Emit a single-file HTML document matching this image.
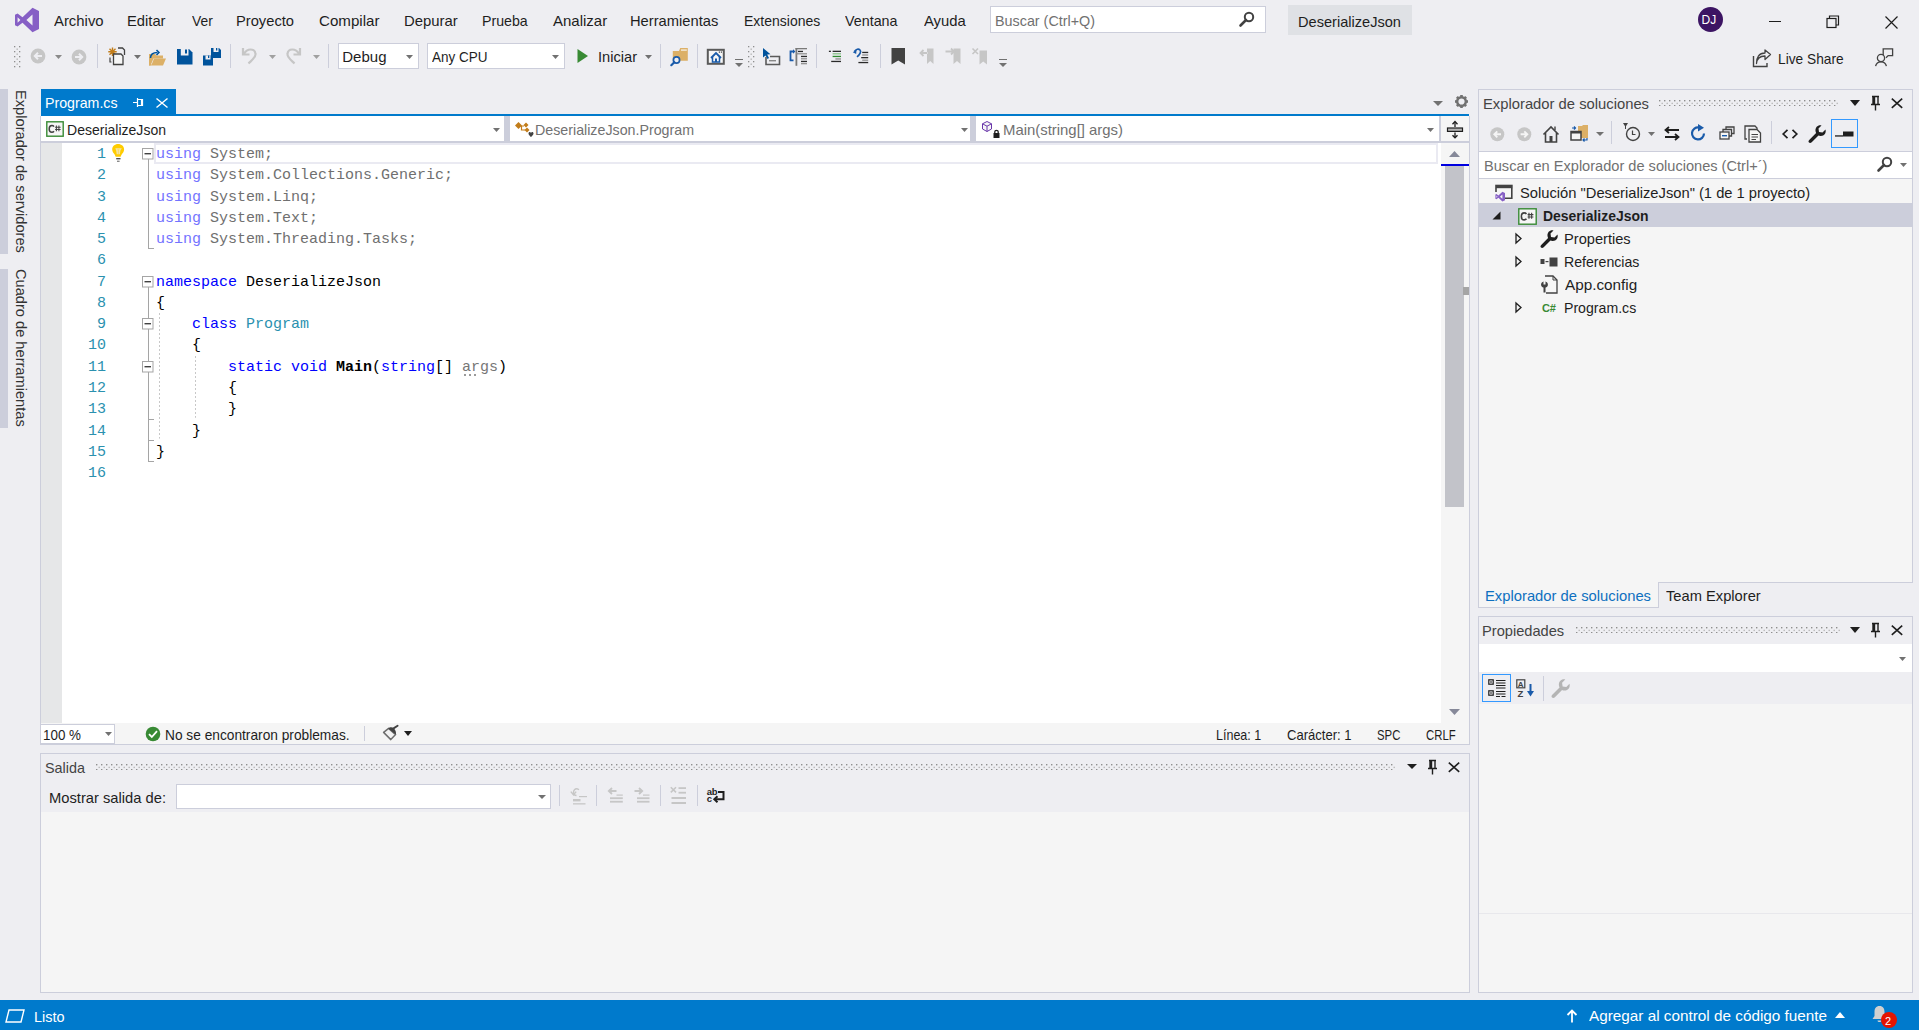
<!DOCTYPE html>
<html><head><meta charset="utf-8"><title>VS</title>
<style>
html,body{margin:0;padding:0;}
body{width:1919px;height:1030px;overflow:hidden;position:relative;background:#EEEEF2;font-family:"Liberation Sans",sans-serif;}
.a{position:absolute;}
.t{white-space:pre;}
svg{position:absolute;overflow:visible;}
</style></head><body>
<div class="a t" style="left:53.97px;top:13.30px;font-size:15px;line-height:15px;color:#1E1E1E;transform:scaleX(0.9914);transform-origin:0 0;">Archivo</div>
<div class="a t" style="left:127.39px;top:13.30px;font-size:15px;line-height:15px;color:#1E1E1E;transform:scaleX(0.9825);transform-origin:0 0;">Editar</div>
<div class="a t" style="left:192.14px;top:13.30px;font-size:15px;line-height:15px;color:#1E1E1E;transform:scaleX(0.9238);transform-origin:0 0;">Ver</div>
<div class="a t" style="left:236.29px;top:13.30px;font-size:15px;line-height:15px;color:#1E1E1E;transform:scaleX(0.9797);transform-origin:0 0;">Proyecto</div>
<div class="a t" style="left:319.23px;top:13.30px;font-size:15px;line-height:15px;color:#1E1E1E;transform:scaleX(1.0081);transform-origin:0 0;">Compilar</div>
<div class="a t" style="left:403.78px;top:13.30px;font-size:15px;line-height:15px;color:#1E1E1E;transform:scaleX(0.9916);transform-origin:0 0;">Depurar</div>
<div class="a t" style="left:481.84px;top:13.30px;font-size:15px;line-height:15px;color:#1E1E1E;transform:scaleX(0.9457);transform-origin:0 0;">Prueba</div>
<div class="a t" style="left:552.97px;top:13.30px;font-size:15px;line-height:15px;color:#1E1E1E;">Analizar</div>
<div class="a t" style="left:630.04px;top:13.30px;font-size:15px;line-height:15px;color:#1E1E1E;transform:scaleX(0.9802);transform-origin:0 0;">Herramientas</div>
<div class="a t" style="left:743.85px;top:13.30px;font-size:15px;line-height:15px;color:#1E1E1E;transform:scaleX(0.9331);transform-origin:0 0;">Extensiones</div>
<div class="a t" style="left:845.44px;top:13.30px;font-size:15px;line-height:15px;color:#1E1E1E;transform:scaleX(0.9535);transform-origin:0 0;">Ventana</div>
<div class="a t" style="left:923.72px;top:13.30px;font-size:15px;line-height:15px;color:#1E1E1E;transform:scaleX(0.9878);transform-origin:0 0;">Ayuda</div>
<div class="a" style="left:990px;top:6px;width:276px;height:27px;background:#FFFFFF;box-shadow:inset 0 0 0 1px #CCCEDB;"></div>
<div class="a t" style="left:995.32px;top:13.30px;font-size:15px;line-height:15px;color:#717171;transform:scaleX(0.9559);transform-origin:0 0;">Buscar (Ctrl+Q)</div>
<div class="a" style="left:1288px;top:5px;width:124px;height:30px;background:#DFE1E5;"></div>
<div class="a t" style="left:1297.80px;top:14.30px;font-size:15px;line-height:15px;color:#1E1E1E;transform:scaleX(0.9727);transform-origin:0 0;">DeserializeJson</div>
<div class="a" style="left:1698px;top:7px;width:25px;height:25px;border-radius:50%;background:#3C1463;"></div>
<div class="a t" style="left:1701.52px;top:14.34px;font-size:12px;line-height:12px;color:#FFFFFF;">DJ</div>
<div class="a" style="left:338px;top:43px;width:81px;height:26px;background:#FFFFFF;box-shadow:inset 0 0 0 1px #CCCEDB;"></div>
<div class="a t" style="left:342.28px;top:49.30px;font-size:15px;line-height:15px;color:#1E1E1E;">Debug</div>
<div class="a" style="left:427px;top:43px;width:138px;height:26px;background:#FFFFFF;box-shadow:inset 0 0 0 1px #CCCEDB;"></div>
<div class="a t" style="left:432.17px;top:49.30px;font-size:15px;line-height:15px;color:#1E1E1E;transform:scaleX(0.8997);transform-origin:0 0;">Any CPU</div>
<div class="a t" style="left:598.25px;top:49.30px;font-size:15px;line-height:15px;color:#1E1E1E;transform:scaleX(0.9746);transform-origin:0 0;">Iniciar</div>
<div class="a t" style="left:1777.87px;top:51.30px;font-size:15px;line-height:15px;color:#1E1E1E;transform:scaleX(0.9147);transform-origin:0 0;">Live Share</div>
<div class="a" style="left:0px;top:89px;width:8px;height:165px;background:#CCCEDB;"></div>
<div class="a" style="left:0px;top:269px;width:8px;height:159px;background:#CCCEDB;"></div>
<div class="a t" style="left:15px;top:90px;font-size:15px;line-height:15px;color:#333333;transform-origin:0 0;transform:translate(14px,0) rotate(90deg) scaleX(0.977);">Explorador de servidores</div>
<div class="a t" style="left:15px;top:268.8px;font-size:15px;line-height:15px;color:#333333;transform-origin:0 0;transform:translate(14px,0) rotate(90deg) scaleX(0.975);">Cuadro de herramientas</div>
<div class="a" style="left:41px;top:89px;width:135px;height:27px;background:#007ACC;"></div>
<div class="a t" style="left:45.44px;top:95.10px;font-size:15px;line-height:15px;color:#FFFFFF;transform:scaleX(0.9454);transform-origin:0 0;">Program.cs</div>
<div class="a" style="left:41px;top:114px;width:1428px;height:2px;background:#007ACC;"></div>
<div class="a" style="left:41px;top:116px;width:1428px;height:25px;background:#FFFFFF;"></div>
<div class="a" style="left:41px;top:141px;width:1428px;height:2px;background:#CCCEDB;"></div>
<div class="a" style="left:504px;top:116px;width:6px;height:25px;background:#CCCEDB;"></div>
<div class="a" style="left:970px;top:116px;width:6px;height:25px;background:#CCCEDB;"></div>
<div class="a" style="left:1439px;top:116px;width:2px;height:25px;background:#CCCEDB;"></div>
<div class="a" style="left:1441px;top:116px;width:28px;height:25px;background:#F5F5F5;"></div>
<div class="a t" style="left:66.85px;top:122.30px;font-size:15px;line-height:15px;color:#1E1E1E;transform:scaleX(0.9349);transform-origin:0 0;">DeserializeJson</div>
<div class="a t" style="left:534.73px;top:122.30px;font-size:15px;line-height:15px;color:#717171;transform:scaleX(0.9488);transform-origin:0 0;">DeserializeJson.Program</div>
<div class="a t" style="left:1002.53px;top:122.30px;font-size:15px;line-height:15px;color:#717171;transform:scaleX(0.9928);transform-origin:0 0;">Main(string[] args)</div>
<div class="a" style="left:40px;top:116px;width:1px;height:629px;background:#CCCEDB;"></div>
<div class="a" style="left:1469px;top:116px;width:1px;height:629px;background:#CCCEDB;"></div>
<div class="a" style="left:41px;top:143px;width:1400px;height:580px;background:#FFFFFF;"></div>
<div class="a" style="left:41px;top:143px;width:21px;height:580px;background:#E6E7E8;"></div>
<div class="a" style="left:1441px;top:143px;width:28px;height:580px;background:#F5F5F5;"></div>
<div class="a" style="left:1445px;top:166px;width:19px;height:341px;background:#C2C3C9;"></div>
<div class="a" style="left:1441px;top:164px;width:28px;height:2px;background:#0000E0;"></div>
<div class="a" style="left:1463px;top:287px;width:6px;height:8px;background:#A5A5A5;"></div>
<div class="a t" style="left:97.00px;top:147.01px;font-size:15px;line-height:15px;color:#2B91AF;font-family:'Liberation Mono',monospace;">1</div>
<div class="a t" style="left:156.00px;top:147.01px;font-size:15px;line-height:15px;color:#7373FF;font-family:'Liberation Mono',monospace;">using</div>
<div class="a t" style="left:201.00px;top:147.01px;font-size:15px;line-height:15px;color:#707070;font-family:'Liberation Mono',monospace;"> System;</div>
<div class="a t" style="left:97.00px;top:168.28px;font-size:15px;line-height:15px;color:#2B91AF;font-family:'Liberation Mono',monospace;">2</div>
<div class="a t" style="left:156.00px;top:168.28px;font-size:15px;line-height:15px;color:#7373FF;font-family:'Liberation Mono',monospace;">using</div>
<div class="a t" style="left:201.00px;top:168.28px;font-size:15px;line-height:15px;color:#707070;font-family:'Liberation Mono',monospace;"> System.Collections.Generic;</div>
<div class="a t" style="left:97.00px;top:189.55px;font-size:15px;line-height:15px;color:#2B91AF;font-family:'Liberation Mono',monospace;">3</div>
<div class="a t" style="left:156.00px;top:189.55px;font-size:15px;line-height:15px;color:#7373FF;font-family:'Liberation Mono',monospace;">using</div>
<div class="a t" style="left:201.00px;top:189.55px;font-size:15px;line-height:15px;color:#707070;font-family:'Liberation Mono',monospace;"> System.Linq;</div>
<div class="a t" style="left:97.00px;top:210.82px;font-size:15px;line-height:15px;color:#2B91AF;font-family:'Liberation Mono',monospace;">4</div>
<div class="a t" style="left:156.00px;top:210.82px;font-size:15px;line-height:15px;color:#7373FF;font-family:'Liberation Mono',monospace;">using</div>
<div class="a t" style="left:201.00px;top:210.82px;font-size:15px;line-height:15px;color:#707070;font-family:'Liberation Mono',monospace;"> System.Text;</div>
<div class="a t" style="left:97.00px;top:232.09px;font-size:15px;line-height:15px;color:#2B91AF;font-family:'Liberation Mono',monospace;">5</div>
<div class="a t" style="left:156.00px;top:232.09px;font-size:15px;line-height:15px;color:#7373FF;font-family:'Liberation Mono',monospace;">using</div>
<div class="a t" style="left:201.00px;top:232.09px;font-size:15px;line-height:15px;color:#707070;font-family:'Liberation Mono',monospace;"> System.Threading.Tasks;</div>
<div class="a t" style="left:97.00px;top:253.36px;font-size:15px;line-height:15px;color:#2B91AF;font-family:'Liberation Mono',monospace;">6</div>
<div class="a t" style="left:97.00px;top:274.63px;font-size:15px;line-height:15px;color:#2B91AF;font-family:'Liberation Mono',monospace;">7</div>
<div class="a t" style="left:156.00px;top:274.63px;font-size:15px;line-height:15px;color:#0000FF;font-family:'Liberation Mono',monospace;">namespace</div>
<div class="a t" style="left:237.00px;top:274.63px;font-size:15px;line-height:15px;color:#000000;font-family:'Liberation Mono',monospace;"> DeserializeJson</div>
<div class="a t" style="left:97.00px;top:295.90px;font-size:15px;line-height:15px;color:#2B91AF;font-family:'Liberation Mono',monospace;">8</div>
<div class="a t" style="left:156.00px;top:295.90px;font-size:15px;line-height:15px;color:#000000;font-family:'Liberation Mono',monospace;">{</div>
<div class="a t" style="left:97.00px;top:317.17px;font-size:15px;line-height:15px;color:#2B91AF;font-family:'Liberation Mono',monospace;">9</div>
<div class="a t" style="left:192.00px;top:317.17px;font-size:15px;line-height:15px;color:#0000FF;font-family:'Liberation Mono',monospace;">class</div>
<div class="a t" style="left:246.00px;top:317.17px;font-size:15px;line-height:15px;color:#2B91AF;font-family:'Liberation Mono',monospace;">Program</div>
<div class="a t" style="left:88.00px;top:338.44px;font-size:15px;line-height:15px;color:#2B91AF;font-family:'Liberation Mono',monospace;">10</div>
<div class="a t" style="left:156.00px;top:338.44px;font-size:15px;line-height:15px;color:#000000;font-family:'Liberation Mono',monospace;">    {</div>
<div class="a t" style="left:88.00px;top:359.71px;font-size:15px;line-height:15px;color:#2B91AF;font-family:'Liberation Mono',monospace;">11</div>
<div class="a t" style="left:228.00px;top:359.71px;font-size:15px;line-height:15px;color:#0000FF;font-family:'Liberation Mono',monospace;">static void</div>
<div class="a t" style="left:336.00px;top:359.71px;font-size:15px;line-height:15px;color:#000000;font-family:'Liberation Mono',monospace;font-weight:700;">Main</div>
<div class="a t" style="left:372.00px;top:359.71px;font-size:15px;line-height:15px;color:#000000;font-family:'Liberation Mono',monospace;">(</div>
<div class="a t" style="left:381.00px;top:359.71px;font-size:15px;line-height:15px;color:#0000FF;font-family:'Liberation Mono',monospace;">string</div>
<div class="a t" style="left:435.00px;top:359.71px;font-size:15px;line-height:15px;color:#000000;font-family:'Liberation Mono',monospace;">[] </div>
<div class="a t" style="left:462.00px;top:359.71px;font-size:15px;line-height:15px;color:#767676;font-family:'Liberation Mono',monospace;">args</div>
<div class="a t" style="left:498.00px;top:359.71px;font-size:15px;line-height:15px;color:#000000;font-family:'Liberation Mono',monospace;">)</div>
<div class="a t" style="left:88.00px;top:380.98px;font-size:15px;line-height:15px;color:#2B91AF;font-family:'Liberation Mono',monospace;">12</div>
<div class="a t" style="left:156.00px;top:380.98px;font-size:15px;line-height:15px;color:#000000;font-family:'Liberation Mono',monospace;">        {</div>
<div class="a t" style="left:88.00px;top:402.25px;font-size:15px;line-height:15px;color:#2B91AF;font-family:'Liberation Mono',monospace;">13</div>
<div class="a t" style="left:156.00px;top:402.25px;font-size:15px;line-height:15px;color:#000000;font-family:'Liberation Mono',monospace;">        }</div>
<div class="a t" style="left:88.00px;top:423.52px;font-size:15px;line-height:15px;color:#2B91AF;font-family:'Liberation Mono',monospace;">14</div>
<div class="a t" style="left:156.00px;top:423.52px;font-size:15px;line-height:15px;color:#000000;font-family:'Liberation Mono',monospace;">    }</div>
<div class="a t" style="left:88.00px;top:444.79px;font-size:15px;line-height:15px;color:#2B91AF;font-family:'Liberation Mono',monospace;">15</div>
<div class="a t" style="left:156.00px;top:444.79px;font-size:15px;line-height:15px;color:#000000;font-family:'Liberation Mono',monospace;">}</div>
<div class="a t" style="left:88.00px;top:466.06px;font-size:15px;line-height:15px;color:#2B91AF;font-family:'Liberation Mono',monospace;">16</div>
<div class="a" style="left:41px;top:723px;width:1428px;height:21px;background:#F5F5F5;"></div>
<div class="a" style="left:40px;top:744px;width:1430px;height:1px;background:#CCCEDB;"></div>
<div class="a" style="left:40px;top:724px;width:75px;height:20px;background:#FFFFFF;box-shadow:inset 0 0 0 1px #CCCEDB;"></div>
<div class="a t" style="left:43.38px;top:727.30px;font-size:15px;line-height:15px;color:#1E1E1E;transform:scaleX(0.8931);transform-origin:0 0;">100 %</div>
<div class="a t" style="left:165.17px;top:727.30px;font-size:15px;line-height:15px;color:#1E1E1E;transform:scaleX(0.9149);transform-origin:0 0;">No se encontraron problemas.</div>
<div class="a t" style="left:1216.37px;top:727.30px;font-size:15px;line-height:15px;color:#1E1E1E;transform:scaleX(0.8337);transform-origin:0 0;">Línea: 1</div>
<div class="a t" style="left:1286.54px;top:727.30px;font-size:15px;line-height:15px;color:#1E1E1E;transform:scaleX(0.8706);transform-origin:0 0;">Carácter: 1</div>
<div class="a t" style="left:1376.68px;top:727.30px;font-size:15px;line-height:15px;color:#1E1E1E;transform:scaleX(0.7587);transform-origin:0 0;">SPC</div>
<div class="a t" style="left:1426.12px;top:727.30px;font-size:15px;line-height:15px;color:#1E1E1E;transform:scaleX(0.7582);transform-origin:0 0;">CRLF</div>
<div class="a" style="left:40px;top:753px;width:1430px;height:240px;background:#F5F5F5;box-shadow:inset 0 0 0 1px #CCCEDB;"></div>
<div class="a" style="left:41px;top:754px;width:1428px;height:58px;background:#EEEEF2;"></div>
<div class="a t" style="left:44.85px;top:760.30px;font-size:15px;line-height:15px;color:#444444;transform:scaleX(0.9592);transform-origin:0 0;">Salida</div>
<svg style="left:96px;top:764px;" width="1300" height="6" viewBox="0 0 1300 6"><defs><pattern id="g96_764" width="5" height="5" patternUnits="userSpaceOnUse"><rect x="0" y="0" width="1.4" height="1.4" fill="#8E8E8E"/><rect x="2.5" y="2.7" width="1.4" height="1.4" fill="#B9B9B9"/></pattern></defs><rect x="0" y="0" width="1300" height="6" fill="url(#g96_764)"/></svg>
<div class="a t" style="left:49.29px;top:790.30px;font-size:15px;line-height:15px;color:#1E1E1E;transform:scaleX(0.9814);transform-origin:0 0;">Mostrar salida de:</div>
<div class="a" style="left:176px;top:784px;width:375px;height:25px;background:#FFFFFF;box-shadow:inset 0 0 0 1px #CCCEDB;"></div>
<div class="a" style="left:1478px;top:89px;width:435px;height:494px;background:#F5F5F5;box-shadow:inset 0 0 0 1px #CCCEDB;"></div>
<div class="a" style="left:1479px;top:90px;width:433px;height:61px;background:#EEEEF2;"></div>
<div class="a t" style="left:1482.79px;top:96.30px;font-size:15px;line-height:15px;color:#444444;transform:scaleX(0.9855);transform-origin:0 0;">Explorador de soluciones</div>
<svg style="left:1659px;top:100px;" width="180" height="6" viewBox="0 0 180 6"><defs><pattern id="g1659_100" width="5" height="5" patternUnits="userSpaceOnUse"><rect x="0" y="0" width="1.4" height="1.4" fill="#8E8E8E"/><rect x="2.5" y="2.7" width="1.4" height="1.4" fill="#B9B9B9"/></pattern></defs><rect x="0" y="0" width="180" height="6" fill="url(#g1659_100)"/></svg>
<div class="a" style="left:1479px;top:151px;width:433px;height:1px;background:#CCCEDB;"></div>
<div class="a" style="left:1479px;top:152px;width:433px;height:26px;background:#FFFFFF;"></div>
<div class="a" style="left:1479px;top:178px;width:433px;height:1px;background:#CCCEDB;"></div>
<div class="a t" style="left:1484.40px;top:158.30px;font-size:15px;line-height:15px;color:#717171;transform:scaleX(0.9726);transform-origin:0 0;">Buscar en Explorador de soluciones (Ctrl+´)</div>
<div class="a" style="left:1479px;top:203px;width:433px;height:24px;background:#CCCEDB;"></div>
<div class="a t" style="left:1520.13px;top:185.30px;font-size:15px;line-height:15px;color:#1E1E1E;transform:scaleX(0.9811);transform-origin:0 0;">Solución &quot;DeserializeJson&quot; (1 de 1 proyecto)</div>
<div class="a t" style="left:1542.97px;top:208.30px;font-size:15px;line-height:15px;color:#1E1E1E;font-weight:700;transform:scaleX(0.9303);transform-origin:0 0;">DeserializeJson</div>
<div class="a t" style="left:1564.10px;top:231.30px;font-size:15px;line-height:15px;color:#1E1E1E;transform:scaleX(0.9755);transform-origin:0 0;">Properties</div>
<div class="a t" style="left:1564.14px;top:254.30px;font-size:15px;line-height:15px;color:#1E1E1E;transform:scaleX(0.9419);transform-origin:0 0;">Referencias</div>
<div class="a t" style="left:1565.27px;top:277.30px;font-size:15px;line-height:15px;color:#1E1E1E;transform:scaleX(1.0185);transform-origin:0 0;">App.config</div>
<div class="a t" style="left:1564.14px;top:300.30px;font-size:15px;line-height:15px;color:#1E1E1E;transform:scaleX(0.9415);transform-origin:0 0;">Program.cs</div>
<div class="a" style="left:1478px;top:582px;width:181px;height:26px;background:#F5F5F5;box-shadow:inset 1px 0 0 #CCCEDB, inset -1px 0 0 #CCCEDB, inset 0 -1px 0 #CCCEDB;"></div>
<div class="a t" style="left:1484.79px;top:588.30px;font-size:15px;line-height:15px;color:#0E70C0;transform:scaleX(0.9855);transform-origin:0 0;">Explorador de soluciones</div>
<div class="a t" style="left:1666.07px;top:588.30px;font-size:15px;line-height:15px;color:#1E1E1E;transform:scaleX(0.9793);transform-origin:0 0;">Team Explorer</div>
<div class="a" style="left:1478px;top:616px;width:435px;height:377px;background:#F5F5F5;box-shadow:inset 0 0 0 1px #CCCEDB;"></div>
<div class="a" style="left:1479px;top:617px;width:433px;height:27px;background:#EEEEF2;"></div>
<div class="a t" style="left:1482.10px;top:623.30px;font-size:15px;line-height:15px;color:#444444;transform:scaleX(0.9758);transform-origin:0 0;">Propiedades</div>
<svg style="left:1576px;top:627px;" width="265" height="6" viewBox="0 0 265 6"><defs><pattern id="g1576_627" width="5" height="5" patternUnits="userSpaceOnUse"><rect x="0" y="0" width="1.4" height="1.4" fill="#8E8E8E"/><rect x="2.5" y="2.7" width="1.4" height="1.4" fill="#B9B9B9"/></pattern></defs><rect x="0" y="0" width="265" height="6" fill="url(#g1576_627)"/></svg>
<div class="a" style="left:1479px;top:644px;width:433px;height:28px;background:#FFFFFF;"></div>
<div class="a" style="left:1479px;top:672px;width:433px;height:32px;background:#EEEEF2;"></div>
<div class="a" style="left:0px;top:1000px;width:1919px;height:30px;background:#007ACC;"></div>
<div class="a t" style="left:34.02px;top:1008.80px;font-size:15px;line-height:15px;color:#FFFFFF;transform:scaleX(0.9625);transform-origin:0 0;">Listo</div>
<div class="a t" style="left:1589.27px;top:1008.30px;font-size:15px;line-height:15px;color:#FFFFFF;transform:scaleX(1.0197);transform-origin:0 0;">Agregar al control de código fuente</div>
<svg style="left:14px;top:7px;" width="26" height="26" viewBox="0 0 26 26"><path d="M18.5,0.8 L25,4 L25,22 L18.5,25.2 L8.5,15.8 L3.6,19.6 L1,18.3 L1,7.7 L3.6,6.4 L8.5,10.2 Z M18.5,7.6 L12.4,13 L18.5,18.4 Z M3.6,10.2 L3.6,15.8 L6.4,13 Z" fill="#865FC5" fill-rule="evenodd"/></svg>
<svg style="left:1239px;top:11px;" width="16" height="16" viewBox="0 0 16 16"><circle cx="10" cy="6" r="4.2" fill="none" stroke="#424242" stroke-width="2"/><line x1="7" y1="9" x2="1.5" y2="14.5" stroke="#424242" stroke-width="2.6" stroke-linecap="round"/></svg>
<div class="a" style="left:1769px;top:21px;width:12px;height:1px;background:#1E1E1E;"></div>
<svg style="left:1826px;top:15px;" width="14" height="14" viewBox="0 0 14 14"><rect x="1" y="3.5" width="9" height="9" fill="none" stroke="#1E1E1E" stroke-width="1.2"/><path d="M3.5,3.5 V1 H12.5 V10 H10" fill="none" stroke="#1E1E1E" stroke-width="1.2"/></svg>
<svg style="left:1885px;top:16px;" width="13" height="13" viewBox="0 0 13 13"><path d="M0.5,0.5 L12.5,12.5 M12.5,0.5 L0.5,12.5" stroke="#1E1E1E" stroke-width="1.2"/></svg>
<svg style="left:14px;top:46px;" width="10" height="25" viewBox="0 0 10 25"><rect x="0.0" y="0" width="1.3" height="1.3" fill="#8E8E8E"/><rect x="5.0" y="0" width="1.3" height="1.3" fill="#8E8E8E"/><rect x="0.0" y="5" width="1.3" height="1.3" fill="#8E8E8E"/><rect x="5.0" y="5" width="1.3" height="1.3" fill="#8E8E8E"/><rect x="0.0" y="10" width="1.3" height="1.3" fill="#8E8E8E"/><rect x="5.0" y="10" width="1.3" height="1.3" fill="#8E8E8E"/><rect x="0.0" y="15" width="1.3" height="1.3" fill="#8E8E8E"/><rect x="5.0" y="15" width="1.3" height="1.3" fill="#8E8E8E"/><rect x="0.0" y="20" width="1.3" height="1.3" fill="#8E8E8E"/><rect x="5.0" y="20" width="1.3" height="1.3" fill="#8E8E8E"/><rect x="2.5" y="2.5" width="1.4" height="1.4" fill="#B9B9B9"/><rect x="2.5" y="7.5" width="1.4" height="1.4" fill="#B9B9B9"/><rect x="2.5" y="12.5" width="1.4" height="1.4" fill="#B9B9B9"/><rect x="2.5" y="17.5" width="1.4" height="1.4" fill="#B9B9B9"/></svg>
<svg style="left:30px;top:48px;" width="16" height="16" viewBox="0 0 16 16"><circle cx="8" cy="8" r="7.4" fill="#C6C6C6"/><path d="M12,8 H5 M8,4.8 L4.8,8 L8,11.2" fill="none" stroke="#EEEEF2" stroke-width="2"/></svg>
<svg style="left:55px;top:55px;" width="7" height="4" viewBox="0 0 7 4"><polygon points="0,0 7,0 3.5,4" fill="#8A8A8A"/></svg>
<svg style="left:71px;top:49px;" width="16" height="16" viewBox="0 0 16 16"><circle cx="8" cy="8" r="7.4" fill="#C6C6C6"/><path d="M4,8 H11 M8,4.8 L11.2,8 L8,11.2" fill="none" stroke="#EEEEF2" stroke-width="2"/></svg>
<div class="a" style="left:97px;top:44px;width:1px;height:24px;background:#CCCEDB;"></div>
<svg style="left:107px;top:46px;" width="20" height="20" viewBox="0 0 20 20"><path d="M5.5,1.5 V10 M1.3,5.7 H9.7 M2.5,2.7 L8.5,8.7 M8.5,2.7 L2.5,8.7" stroke="#C27D1A" stroke-width="1.4"/><path d="M11,2 H15.5 L17.5,4 V9" fill="none" stroke="#424242" stroke-width="1.3"/><path d="M6.5,8 H14 L16,10 V18.5 H6.5 Z" fill="#F6F6F6" stroke="#424242" stroke-width="1.3"/><path d="M3,11.5 V16 H4.5" fill="none" stroke="#424242" stroke-width="1.2"/></svg>
<svg style="left:134px;top:55px;" width="7" height="4" viewBox="0 0 7 4"><polygon points="0,0 7,0 3.5,4" fill="#717171"/></svg>
<svg style="left:148px;top:50px;" width="20" height="17" viewBox="0 0 20 17"><path d="M1,6 V15.5 H15 L18,8.5 H6 L3.5,15" fill="#DCB067"/><path d="M1,15.5 V4 H7 L8.5,5.5 H15 V8.5 H5.5 L2.5,15.5 Z" fill="#DCB067"/><path d="M2.5,8 C2.5,4 5,2.5 9.5,2.5" fill="none" stroke="#00539C" stroke-width="1.5"/><path d="M8.5,0 L11,2.5 L8.5,5" fill="none" stroke="#00539C" stroke-width="1.5"/></svg>
<svg style="left:177px;top:49px;" width="16" height="16" viewBox="0 0 16 16"><path d="M0,0 H12 L15.5,3.5 V15.5 H0 Z" fill="#00539C"/><rect x="3.8" y="0" width="7.7" height="6.5" fill="#EEEEF2"/><rect x="8" y="0.5" width="2" height="4" fill="#00539C"/></svg>
<svg style="left:203px;top:47px;" width="19" height="19" viewBox="0 0 19 19"><path d="M8,1 H16 L18,3 V11 H8 Z" fill="#00539C"/><rect x="10.5" y="1" width="5" height="4" fill="#EEEEF2"/><rect x="13" y="1" width="1.3" height="2.5" fill="#00539C"/><path d="M0,8.5 H8 L10,10.5 V18.5 H0 Z" fill="#00539C"/><rect x="2.5" y="8.5" width="5" height="4" fill="#EEEEF2"/><rect x="5" y="8.5" width="1.3" height="2.5" fill="#00539C"/></svg>
<div class="a" style="left:230px;top:44px;width:1px;height:24px;background:#CCCEDB;"></div>
<svg style="left:241px;top:46px;" width="17" height="19" viewBox="0 0 17 19"><path d="M2,2 V8.5 H8.5" fill="none" stroke="#C6C6C6" stroke-width="2.2"/><path d="M3,8 C6,2 14,2 14.5,8 C15,11 11,14 7.5,17.5" fill="none" stroke="#C6C6C6" stroke-width="2.2"/></svg>
<svg style="left:269px;top:55px;" width="7" height="4" viewBox="0 0 7 4"><polygon points="0,0 7,0 3.5,4" fill="#A0A0A0"/></svg>
<svg style="left:285px;top:46px;" width="17" height="19" viewBox="0 0 17 19"><path d="M15,2 V8.5 H8.5" fill="none" stroke="#C6C6C6" stroke-width="2.2"/><path d="M14,8 C11,2 3,2 2.5,8 C2,11 6,14 9.5,17.5" fill="none" stroke="#C6C6C6" stroke-width="2.2"/></svg>
<svg style="left:313px;top:55px;" width="7" height="4" viewBox="0 0 7 4"><polygon points="0,0 7,0 3.5,4" fill="#A0A0A0"/></svg>
<div class="a" style="left:328px;top:44px;width:1px;height:24px;background:#CCCEDB;"></div>
<svg style="left:406px;top:55px;" width="7" height="4" viewBox="0 0 7 4"><polygon points="0,0 7,0 3.5,4" fill="#717171"/></svg>
<svg style="left:552px;top:55px;" width="7" height="4" viewBox="0 0 7 4"><polygon points="0,0 7,0 3.5,4" fill="#717171"/></svg>
<svg style="left:577px;top:49px;" width="12" height="15" viewBox="0 0 12 15"><polygon points="0.5,0 11,7 0.5,14" fill="#388A34"/></svg>
<svg style="left:645px;top:55px;" width="7" height="4" viewBox="0 0 7 4"><polygon points="0,0 7,0 3.5,4" fill="#717171"/></svg>
<div class="a" style="left:660px;top:44px;width:1px;height:24px;background:#CCCEDB;"></div>
<svg style="left:669px;top:46px;" width="21" height="22" viewBox="0 0 21 22"><path d="M3.8,5 H10 L11.2,2 H18.8 V14.8 H3.8 Z" fill="#DCB067"/><rect x="12" y="3.3" width="5.8" height="1.6" fill="#F1E6D0"/><circle cx="7.5" cy="14" r="3.1" fill="#EEEEF2" stroke="#1A5BAA" stroke-width="1.7"/><line x1="5.3" y1="16.2" x2="2.3" y2="19.2" stroke="#1A5BAA" stroke-width="2.2" stroke-linecap="round"/></svg>
<div class="a" style="left:697px;top:44px;width:1px;height:24px;background:#CCCEDB;"></div>
<svg style="left:706px;top:48px;" width="20" height="18" viewBox="0 0 20 18"><rect x="1.8" y="1.8" width="16" height="14" fill="#F6F6F6" stroke="#5A5A5A" stroke-width="2"/><path d="M5,10 L10,5 L15,10" fill="none" stroke="#1A5BAA" stroke-width="1.8"/><path d="M6.5,9 V14 H13.5 V9" fill="none" stroke="#1A5BAA" stroke-width="1.5"/><rect x="9" y="10.5" width="2" height="3.5" fill="#1A5BAA"/><rect x="12.8" y="3.5" width="1.2" height="1.2" fill="#3A3A3A"/><rect x="14.8" y="3.5" width="1.2" height="1.2" fill="#3A3A3A"/></svg>
<div class="a" style="left:735px;top:59px;width:8px;height:1.2px;background:#717171;"></div>
<svg style="left:735px;top:63px;" width="8" height="4" viewBox="0 0 8 4"><polygon points="0,0 8,0 4.0,4" fill="#717171"/></svg>
<svg style="left:748px;top:46px;" width="10" height="25" viewBox="0 0 10 25"><rect x="0.0" y="0" width="1.3" height="1.3" fill="#8E8E8E"/><rect x="5.0" y="0" width="1.3" height="1.3" fill="#8E8E8E"/><rect x="0.0" y="5" width="1.3" height="1.3" fill="#8E8E8E"/><rect x="5.0" y="5" width="1.3" height="1.3" fill="#8E8E8E"/><rect x="0.0" y="10" width="1.3" height="1.3" fill="#8E8E8E"/><rect x="5.0" y="10" width="1.3" height="1.3" fill="#8E8E8E"/><rect x="0.0" y="15" width="1.3" height="1.3" fill="#8E8E8E"/><rect x="5.0" y="15" width="1.3" height="1.3" fill="#8E8E8E"/><rect x="0.0" y="20" width="1.3" height="1.3" fill="#8E8E8E"/><rect x="5.0" y="20" width="1.3" height="1.3" fill="#8E8E8E"/><rect x="2.5" y="2.5" width="1.4" height="1.4" fill="#B9B9B9"/><rect x="2.5" y="7.5" width="1.4" height="1.4" fill="#B9B9B9"/><rect x="2.5" y="12.5" width="1.4" height="1.4" fill="#B9B9B9"/><rect x="2.5" y="17.5" width="1.4" height="1.4" fill="#B9B9B9"/></svg>
<svg style="left:762px;top:47px;" width="20" height="19" viewBox="0 0 20 19"><path d="M1,1 L1,10.5 L3.5,8.5 L5.5,12 L7,11 L5.2,7.6 L8.5,7.2 Z" fill="#00539C"/><path d="M4,10 V17.5 H17.5 V9.5 H8" fill="none" stroke="#5A5A5A" stroke-width="1.6"/><rect x="7" y="13" width="7" height="1.4" fill="#888"/></svg>
<svg style="left:785px;top:44px;" width="26" height="24" viewBox="0 0 26 24"><path d="M8.5,7.5 H5.5 V16.3 H8.5" fill="none" stroke="#1A5BAA" stroke-width="1.8"/><polygon points="8,5.3 10.5,7.5 8,9.7" fill="#1A5BAA"/><rect x="10.5" y="4" width="1.8" height="17.8" fill="#7A7A7A"/><rect x="10.5" y="4" width="11.5" height="1.3" fill="#7A7A7A"/><rect x="13" y="6.8" width="5" height="1.3" fill="#2A2A2A"/><rect x="11" y="9.2" width="11" height="1.2" fill="#8A8A8A"/><rect x="16" y="11.8" width="6" height="1.3" fill="#2A2A2A"/><rect x="16" y="14.2" width="6" height="1.2" fill="#8A8A8A"/><rect x="16" y="16.8" width="6" height="1.3" fill="#2A2A2A"/><rect x="16" y="19.1" width="6" height="1.2" fill="#8A8A8A"/></svg>
<div class="a" style="left:816px;top:44px;width:1px;height:24px;background:#CCCEDB;"></div>
<svg style="left:826px;top:44px;" width="18" height="22" viewBox="0 0 18 22"><rect x="2.9" y="6.7" width="2" height="1.3" fill="#2A2A2A"/><rect x="6.6" y="6.7" width="8.4" height="1.3" fill="#2A2A2A"/><rect x="6.6" y="9.2" width="8.4" height="1.2" fill="#7FBF7F"/><rect x="6.6" y="11.8" width="8.4" height="1.3" fill="#2E8B2E"/><rect x="9.4" y="14.3" width="5.6" height="1.3" fill="#8A8A8A"/><rect x="5.2" y="16.8" width="9.8" height="1.3" fill="#2A2A2A"/></svg>
<svg style="left:852px;top:44px;" width="18" height="22" viewBox="0 0 18 22"><path d="M2.5,7.5 C4,5 6.5,4.5 8,6 C9.5,7.5 8,10.5 5,12.8" fill="none" stroke="#1A5BAA" stroke-width="1.7"/><polygon points="0.8,8.2 4.5,5.8 4.2,10" fill="#1A5BAA"/><rect x="10.2" y="7.8" width="6" height="1.3" fill="#2A2A2A"/><rect x="10.2" y="10.4" width="6" height="1.2" fill="#8A8A8A"/><rect x="9.2" y="13" width="7" height="1.3" fill="#2A2A2A"/><rect x="10.2" y="15.6" width="6" height="1.2" fill="#8A8A8A"/><rect x="6.4" y="17.9" width="9.8" height="1.3" fill="#2A2A2A"/></svg>
<div class="a" style="left:880px;top:44px;width:1px;height:24px;background:#CCCEDB;"></div>
<svg style="left:891px;top:48px;" width="15" height="17" viewBox="0 0 15 17"><path d="M0.5,0 H14 V16.5 L7.2,12.5 L0.5,16.5 Z" fill="#424242"/></svg>
<svg style="left:919px;top:47px;" width="16" height="18" viewBox="0 0 16 18"><path d="M8,1.5 H14.5 V17 L11.2,14 L8,17 Z" fill="#C6C6C6"/><path d="M9,6 H1.5 M4.5,3 L1.5,6 L4.5,9" fill="none" stroke="#C6C6C6" stroke-width="1.8"/><path d="M9,6 H8" stroke="#EEEEF2"/></svg>
<svg style="left:945px;top:47px;" width="17" height="18" viewBox="0 0 17 18"><path d="M8.5,1.5 H15.5 V17 L12,14 L8.5,17 Z" fill="#C6C6C6"/><path d="M0.5,4.5 H9 M6,1.5 L9,4.5 L6,7.5" fill="none" stroke="#C6C6C6" stroke-width="1.8"/></svg>
<svg style="left:972px;top:48px;" width="17" height="18" viewBox="0 0 17 18"><path d="M7.5,2.5 H15 V16.5 L11.2,13.5 L7.5,16.5 Z" fill="#C6C6C6"/><path d="M0.5,0.5 L6,6 M6,0.5 L0.5,6" stroke="#C6C6C6" stroke-width="1.6"/></svg>
<div class="a" style="left:999px;top:59px;width:8px;height:1.2px;background:#717171;"></div>
<svg style="left:999px;top:63px;" width="8" height="4" viewBox="0 0 8 4"><polygon points="0,0 8,0 4.0,4" fill="#717171"/></svg>
<svg style="left:1752px;top:50px;" width="20" height="18" viewBox="0 0 20 18"><path d="M1.5,6 V16.5 H15 V13" fill="none" stroke="#424242" stroke-width="1.4"/><path d="M4.5,13.5 C5,8 8.5,6 13,6 V9.5 L18.5,4.5 L13,0 V3 C7,3 4.5,7 4.5,13.5 Z" fill="none" stroke="#424242" stroke-width="1.3" stroke-linejoin="round"/></svg>
<svg style="left:1875px;top:47px;" width="19" height="20" viewBox="0 0 19 20"><path d="M8.2,9.5 V1.8 H17.6 V8.6 H13.2 L11,10.8" fill="none" stroke="#424242" stroke-width="1.3"/><circle cx="6" cy="11" r="3.6" fill="#EEEEF2" stroke="#424242" stroke-width="1.3"/><path d="M0.6,19.2 C1.2,16.2 3.2,14.8 6,14.8 C8.8,14.8 10.8,16.2 11.4,19.2" fill="none" stroke="#424242" stroke-width="1.3"/></svg>
<svg style="left:133px;top:98px;" width="11" height="10" viewBox="0 0 11 10"><path d="M0,4.5 H4.5 M4.5,0 V9 M4.5,1.5 H9.5 V7.5 H4.5 M8.5,1.5 V7.5" fill="none" stroke="#FFFFFF" stroke-width="1.2"/></svg>
<svg style="left:156px;top:98px;" width="12" height="10" viewBox="0 0 12 10"><path d="M0.5,0.5 L11.5,9.5 M11.5,0.5 L0.5,9.5" stroke="#FFFFFF" stroke-width="1.4"/></svg>
<svg style="left:1433px;top:101px;" width="10" height="5" viewBox="0 0 10 5"><polygon points="0,0 10,0 5.0,5" fill="#717171"/></svg>
<svg style="left:1455px;top:95px;" width="13" height="13" viewBox="0 0 13 13"><g transform="translate(6.5,6.5)"><circle r="4.3" fill="none" stroke="#717171" stroke-width="2.4"/><rect x="-1.3" y="-6.5" width="2.6" height="3" fill="#717171" transform="rotate(0)"/><rect x="-1.3" y="-6.5" width="2.6" height="3" fill="#717171" transform="rotate(45)"/><rect x="-1.3" y="-6.5" width="2.6" height="3" fill="#717171" transform="rotate(90)"/><rect x="-1.3" y="-6.5" width="2.6" height="3" fill="#717171" transform="rotate(135)"/><rect x="-1.3" y="-6.5" width="2.6" height="3" fill="#717171" transform="rotate(180)"/><rect x="-1.3" y="-6.5" width="2.6" height="3" fill="#717171" transform="rotate(225)"/><rect x="-1.3" y="-6.5" width="2.6" height="3" fill="#717171" transform="rotate(270)"/><rect x="-1.3" y="-6.5" width="2.6" height="3" fill="#717171" transform="rotate(315)"/></g></svg>
<svg style="left:46px;top:121px;" width="18" height="16" viewBox="0 0 18 16"><rect x="0.8" y="0.8" width="16.4" height="14.4" fill="#F6F6F6" stroke="#388A34" stroke-width="1.4"/><g transform="scale(1.0,1.0)"><path d="M8,5.6 C7.4,4.8 6.6,4.6 5.9,4.6 C4.2,4.6 3.2,6 3.2,7.9 C3.2,9.8 4.2,11.2 5.9,11.2 C6.6,11.2 7.4,11 8,10.2" fill="none" stroke="#424242" stroke-width="1.5"/><path d="M10.4,4.4 V10.2 M12.9,4.4 V10.2 M9.1,6.2 H14.6 M9.1,8.5 H14.6" stroke="#424242" stroke-width="1.05"/></g></svg>
<svg style="left:493px;top:128px;" width="7" height="4" viewBox="0 0 7 4"><polygon points="0,0 7,0 3.5,4" fill="#717171"/></svg>
<svg style="left:514px;top:120px;" width="20" height="18" viewBox="0 0 20 18"><path d="M1,5.5 L4.5,2 L8,5.5 L4.5,9 Z" fill="#C27D1A"/><path d="M9.5,5 L12,2.5 L14.5,5 L12,7.5 Z M10.5,10 L13,7.5 L15.5,10 L13,12.5 Z" fill="#C27D1A"/><path d="M5.5,6 H10 M7.5,6 V10 H11" fill="none" stroke="#C27D1A" stroke-width="1.2"/><path d="M14.5,13.5 C14.5,11.5 17,11.5 17,13.5 C17,11.5 19.5,11.5 19.5,13.5 C19.5,15 17,17 17,17 C17,17 14.5,15 14.5,13.5 Z" fill="#424242"/></svg>
<svg style="left:961px;top:128px;" width="7" height="4" viewBox="0 0 7 4"><polygon points="0,0 7,0 3.5,4" fill="#717171"/></svg>
<svg style="left:981px;top:120px;" width="21" height="19" viewBox="0 0 21 19"><path d="M6,1.5 L10.5,3.8 V9 L6,11.5 L1.5,9 V3.8 Z" fill="#F6F6F6" stroke="#6936AA" stroke-width="1"/><path d="M1.5,3.8 L6,6.2 L10.5,3.8 M6,6.2 V11.5" fill="none" stroke="#6936AA" stroke-width="1"/><path d="M13.8,13 V11.8 C13.8,10 17.2,10 17.2,11.8 V13" fill="none" stroke="#1E1E1E" stroke-width="1.3"/><rect x="12.5" y="13" width="6" height="5" fill="#1E1E1E"/></svg>
<svg style="left:1427px;top:128px;" width="7" height="4" viewBox="0 0 7 4"><polygon points="0,0 7,0 3.5,4" fill="#717171"/></svg>
<svg style="left:1447px;top:121px;" width="16" height="18" viewBox="0 0 16 18"><rect x="0.5" y="7" width="15" height="3.4" fill="#B4B4B4" stroke="#1E1E1E" stroke-width="1.2"/><path d="M8,1 V6 M8,11.5 V16.5" stroke="#1E1E1E" stroke-width="1.3"/><path d="M5.5,3.2 L8,0.5 L10.5,3.2 M5.5,14.2 L8,16.8 L10.5,14.2" fill="none" stroke="#1E1E1E" stroke-width="1.3"/></svg>
<svg style="left:1449px;top:151px;" width="11" height="6" viewBox="0 0 11 6"><polygon points="0,6 11,6 5.5,0" fill="#868999"/></svg>
<svg style="left:1449px;top:709px;" width="11" height="6" viewBox="0 0 11 6"><polygon points="0,0 11,0 5.5,6" fill="#868999"/></svg>
<div class="a" style="left:154px;top:143px;width:1284px;height:21px;box-shadow:inset 0 0 0 2px #EAEAF2;"></div>
<svg style="left:111px;top:143px;" width="15" height="20" viewBox="0 0 15 20"><path d="M7.1,1 C10.5,1 13.1,3.3 13.1,6.5 C13.1,8.8 11.6,10.2 10.5,11.8 L9.7,13.8 H4.6 L3.8,11.8 C2.7,10.2 1.2,8.8 1.2,6.5 C1.2,3.3 3.8,1 7.1,1 Z" fill="#FFCC00"/><polygon points="4.3,5.2 10.8,5.2 9.4,7.4 8.9,11.2 5.7,11.2 5.2,7.4" fill="#F3E4A6"/><polygon points="6.3,6.3 8.5,6.3 7.8,7.8 7.8,11 6.9,11 6.9,7.8" fill="#F8D860"/><rect x="5.2" y="15" width="4.3" height="1.4" fill="#505050"/><rect x="6" y="17.6" width="2.6" height="1.4" fill="#8A8A8A"/></svg>
<svg style="left:142px;top:148px;" width="12" height="12" viewBox="0 0 12 12"><rect x="0.5" y="0.5" width="10.5" height="10.5" fill="#FFFFFF" stroke="#A5A5A5" stroke-width="1"/><rect x="2.5" y="5" width="6.5" height="1.4" fill="#424242"/></svg>
<svg style="left:142px;top:276px;" width="12" height="12" viewBox="0 0 12 12"><rect x="0.5" y="0.5" width="10.5" height="10.5" fill="#FFFFFF" stroke="#A5A5A5" stroke-width="1"/><rect x="2.5" y="5" width="6.5" height="1.4" fill="#424242"/></svg>
<svg style="left:142px;top:318px;" width="12" height="12" viewBox="0 0 12 12"><rect x="0.5" y="0.5" width="10.5" height="10.5" fill="#FFFFFF" stroke="#A5A5A5" stroke-width="1"/><rect x="2.5" y="5" width="6.5" height="1.4" fill="#424242"/></svg>
<svg style="left:142px;top:361px;" width="12" height="12" viewBox="0 0 12 12"><rect x="0.5" y="0.5" width="10.5" height="10.5" fill="#FFFFFF" stroke="#A5A5A5" stroke-width="1"/><rect x="2.5" y="5" width="6.5" height="1.4" fill="#424242"/></svg>
<div class="a" style="left:148px;top:159px;width:1px;height:90px;background:#A5A5A5;"></div>
<div class="a" style="left:148px;top:248px;width:6px;height:1px;background:#A5A5A5;"></div>
<div class="a" style="left:148px;top:287px;width:1px;height:31px;background:#A5A5A5;"></div>
<div class="a" style="left:148px;top:329px;width:1px;height:32px;background:#A5A5A5;"></div>
<div class="a" style="left:148px;top:372px;width:1px;height:90px;background:#A5A5A5;"></div>
<div class="a" style="left:148px;top:419px;width:6px;height:1px;background:#A5A5A5;"></div>
<div class="a" style="left:148px;top:440px;width:6px;height:1px;background:#A5A5A5;"></div>
<div class="a" style="left:148px;top:461px;width:6px;height:1px;background:#A5A5A5;"></div>
<svg style="left:159px;top:313px;" width="1" height="126" viewBox="0 0 1 126"><line x1="0.5" y1="0" x2="0.5" y2="125.62" stroke="#C8C8C8" stroke-width="1" stroke-dasharray="2,2"/></svg>
<svg style="left:195px;top:356px;" width="1" height="62" viewBox="0 0 1 62"><line x1="0.5" y1="0" x2="0.5" y2="61.81" stroke="#C8C8C8" stroke-width="1" stroke-dasharray="2,2"/></svg>
<div class="a" style="left:464px;top:374px;width:2px;height:2px;background:#9A9A9A;"></div>
<div class="a" style="left:469px;top:374px;width:2px;height:2px;background:#9A9A9A;"></div>
<div class="a" style="left:474px;top:374px;width:2px;height:2px;background:#9A9A9A;"></div>
<svg style="left:105px;top:732px;" width="7" height="4" viewBox="0 0 7 4"><polygon points="0,0 7,0 3.5,4" fill="#717171"/></svg>
<svg style="left:145px;top:726px;" width="16" height="16" viewBox="0 0 16 16"><circle cx="8" cy="8" r="7.3" fill="#388A34"/><path d="M4,8.2 L6.8,11 L12,5.2" fill="none" stroke="#FFFFFF" stroke-width="1.8"/></svg>
<div class="a" style="left:364px;top:726px;width:1px;height:15px;background:#CCCEDB;"></div>
<svg style="left:382px;top:724px;" width="17" height="17" viewBox="0 0 17 17"><polygon points="1.6,8.4 6.6,4.4 13.6,10.6 8.8,15.6" fill="#F2F2F2" stroke="#6E6E6E" stroke-width="1.5" stroke-linejoin="round"/><path d="M6.2,4.6 C7.5,3 10,2.6 11.8,4.2 C13.6,5.8 14.4,8.5 13.8,10.6 Z" fill="#424242"/><line x1="11.6" y1="4.4" x2="15.6" y2="1.8" stroke="#424242" stroke-width="1.9" stroke-linecap="round"/></svg>
<svg style="left:404px;top:731px;" width="8" height="5" viewBox="0 0 8 5"><polygon points="0,0 8,0 4.0,5" fill="#1E1E1E"/></svg>
<svg style="left:1407px;top:764px;" width="10" height="5" viewBox="0 0 10 5"><polygon points="0,0 10,0 5.0,5" fill="#1E1E1E"/></svg>
<svg style="left:1427px;top:760px;" width="11" height="15" viewBox="0 0 11 15"><path d="M2,0.5 H9 M3,0.5 V8.5 H8 V0.5 M1,8.5 H10 M5.5,8.5 V14.5" fill="none" stroke="#1E1E1E" stroke-width="1.4"/><rect x="3" y="0.5" width="2.2" height="8" fill="#1E1E1E"/></svg>
<svg style="left:1448px;top:761.5px;" width="12" height="10.5" viewBox="0 0 12 10.5"><path d="M0.8,0.6 L11.2,9.9 M11.2,0.6 L0.8,9.9" stroke="#1E1E1E" stroke-width="1.6"/></svg>
<svg style="left:538px;top:795px;" width="8" height="4" viewBox="0 0 8 4"><polygon points="0,0 8,0 4.0,4" fill="#717171"/></svg>
<div class="a" style="left:559px;top:785px;width:1px;height:21px;background:#CCCEDB;"></div>
<div class="a" style="left:596px;top:785px;width:1px;height:21px;background:#CCCEDB;"></div>
<div class="a" style="left:660px;top:785px;width:1px;height:21px;background:#CCCEDB;"></div>
<div class="a" style="left:697px;top:785px;width:1px;height:21px;background:#CCCEDB;"></div>
<svg style="left:568px;top:785px;" width="20" height="22" viewBox="0 0 20 22"><path d="M8.5,10.5 C6.8,10.5 5.5,9.2 5.5,7.5 C5.5,5.2 7,3.8 8.8,3.8 C9.8,3.8 10.5,4.3 10.8,5" fill="none" stroke="#C6C6C6" stroke-width="1.4"/><path d="M2.8,6.6 L5.5,9.8 L8.2,6.6" fill="none" stroke="#C6C6C6" stroke-width="1.4"/><rect x="11" y="11" width="8" height="1.2" fill="#C6C6C6"/><rect x="5" y="14" width="7.5" height="2.4" fill="#C6C6C6"/><rect x="5" y="18.2" width="12.5" height="1.3" fill="#C6C6C6"/></svg>
<svg style="left:606px;top:785px;" width="18" height="20" viewBox="0 0 18 20"><path d="M10.5,6 H3 M6,3 L2.8,6 L6,9" fill="none" stroke="#C6C6C6" stroke-width="1.8"/><rect x="10.5" y="9.5" width="6.3" height="1.2" fill="#C6C6C6"/><rect x="4" y="12.3" width="12.8" height="1.8" fill="#C6C6C6"/><rect x="4" y="15.8" width="12.8" height="1.8" fill="#C6C6C6"/></svg>
<svg style="left:633px;top:785px;" width="18" height="20" viewBox="0 0 18 20"><path d="M1.5,6 H9 M6,3 L9.2,6 L6,9" fill="none" stroke="#C6C6C6" stroke-width="1.8"/><rect x="10" y="9.5" width="6.5" height="1.2" fill="#C6C6C6"/><rect x="4" y="12.3" width="12.5" height="1.8" fill="#C6C6C6"/><rect x="4" y="15.8" width="12.5" height="1.8" fill="#C6C6C6"/></svg>
<svg style="left:669px;top:785px;" width="19" height="21" viewBox="0 0 19 21"><path d="M1.8,2.2 L7,7.4 M7,2.2 L1.8,7.4" stroke="#C6C6C6" stroke-width="1.6"/><rect x="9.5" y="2.2" width="7.5" height="1.8" fill="#C6C6C6"/><rect x="9.5" y="6.8" width="7.5" height="1.8" fill="#C6C6C6"/><rect x="2.5" y="12" width="14.5" height="2" fill="#C6C6C6"/><rect x="2.5" y="17" width="14.5" height="2" fill="#C6C6C6"/></svg>
<svg style="left:706px;top:785px;" width="20" height="20" viewBox="0 0 20 20"><text x="0.8" y="9.5" font-family="Liberation Sans" font-weight="bold" font-size="9.5" fill="#1E1E1E" letter-spacing="-0.4">ab</text><text x="0.8" y="17" font-family="Liberation Sans" font-weight="bold" font-size="9.5" fill="#1E1E1E">c</text><path d="M12,7 H17.5 V14.2 H9" fill="none" stroke="#1E1E1E" stroke-width="2"/><path d="M11.5,11.2 L8.3,14.2 L11.5,17.2" fill="none" stroke="#1E1E1E" stroke-width="2"/></svg>
<svg style="left:1850px;top:100px;" width="10" height="6" viewBox="0 0 10 6"><polygon points="0,0 10,0 5.0,6" fill="#1E1E1E"/></svg>
<svg style="left:1870px;top:96px;" width="11" height="15" viewBox="0 0 11 15"><path d="M2,0.5 H9 M3,0.5 V8.5 H8 V0.5 M1,8.5 H10 M5.5,8.5 V14.5" fill="none" stroke="#1E1E1E" stroke-width="1.4"/><rect x="3" y="0.5" width="2.2" height="8" fill="#1E1E1E"/></svg>
<svg style="left:1891px;top:97.5px;" width="12" height="10.5" viewBox="0 0 12 10.5"><path d="M0.8,0.6 L11.2,9.9 M11.2,0.6 L0.8,9.9" stroke="#1E1E1E" stroke-width="1.6"/></svg>
<svg style="left:1490px;top:127px;" width="15" height="15" viewBox="0 0 15 15"><circle cx="7.3" cy="7.3" r="7" fill="#C6C6C6"/><path d="M11,7.3 H4.3 M7.3,4.3 L4.3,7.3 L7.3,10.3" fill="none" stroke="#F5F5F5" stroke-width="1.9"/></svg>
<svg style="left:1517px;top:127px;" width="15" height="15" viewBox="0 0 15 15"><circle cx="7.3" cy="7.3" r="7" fill="#C6C6C6"/><path d="M3.6,7.3 H10.3 M7.3,4.3 L10.3,7.3 L7.3,10.3" fill="none" stroke="#F5F5F5" stroke-width="1.9"/></svg>
<svg style="left:1542px;top:125px;" width="18" height="18" viewBox="0 0 18 18"><path d="M1.5,9.5 L9,2 L16.5,9.5" fill="none" stroke="#424242" stroke-width="1.6"/><path d="M3.5,8 V17 H14.5 V8" fill="none" stroke="#424242" stroke-width="1.6"/><rect x="7.5" y="11" width="3" height="6" fill="#424242"/><path d="M13,5 V1.5" stroke="#424242" stroke-width="1.4"/></svg>
<svg style="left:1570px;top:124px;" width="19" height="18" viewBox="0 0 19 18"><path d="M8,2 H12 L13,1 H18 V14 H8 Z" fill="#DCB067"/><rect x="1" y="7.5" width="10" height="8.5" fill="#F5F5F5" stroke="#424242" stroke-width="1.5"/><rect x="1" y="7.5" width="10" height="2" fill="#424242"/><path d="M2,4 H5 M4,2.5 L5.5,4 L4,5.5" fill="none" stroke="#1A5BAA" stroke-width="1.2"/><path d="M17,14 V16 H13 M14.5,14.5 L13,16 L14.5,17.5" fill="none" stroke="#1A5BAA" stroke-width="1.2"/></svg>
<svg style="left:1596px;top:132px;" width="8" height="4" viewBox="0 0 8 4"><polygon points="0,0 8,0 4.0,4" fill="#717171"/></svg>
<div class="a" style="left:1611px;top:121px;width:1px;height:23px;background:#CCCEDB;"></div>
<svg style="left:1623px;top:123px;" width="18" height="19" viewBox="0 0 18 19"><polygon points="0,0 5,0 2.5,4" fill="#424242"/><path d="M2.5,3 V6" stroke="#424242" stroke-width="1"/><circle cx="10" cy="11" r="6.5" fill="none" stroke="#424242" stroke-width="1.4"/><path d="M9.5,7.5 V11.5 H12.5" fill="none" stroke="#424242" stroke-width="1.2"/></svg>
<svg style="left:1648px;top:132px;" width="7" height="4" viewBox="0 0 7 4"><polygon points="0,0 7,0 3.5,4" fill="#717171"/></svg>
<svg style="left:1664px;top:126px;" width="16" height="16" viewBox="0 0 16 16"><path d="M15,4 H2 M5,1 L1.5,4 L5,7 M1,11 H14 M11,8 L14.5,11 L11,14" fill="none" stroke="#1E1E1E" stroke-width="1.8"/></svg>
<svg style="left:1690px;top:124px;" width="18" height="19" viewBox="0 0 18 19"><path d="M14,9.5 A6,6 0 1 1 9,3.5" fill="none" stroke="#1A5BAA" stroke-width="2.2"/><polygon points="8,0 14,3.8 8,7.5" fill="#1A5BAA"/></svg>
<svg style="left:1719px;top:126px;" width="16" height="14" viewBox="0 0 16 14"><rect x="1" y="6" width="9" height="7" fill="#F5F5F5" stroke="#424242" stroke-width="1.3"/><path d="M4,6 V3.5 H12.5 V10 H10 M7,3.5 V1 H15 V7.5 H12.5" fill="none" stroke="#424242" stroke-width="1.3"/><rect x="3" y="9" width="5" height="1.4" fill="#1A5BAA"/></svg>
<svg style="left:1744px;top:125px;" width="18" height="18" viewBox="0 0 18 18"><path d="M3,14 H1 V1 H11 L13,3 V4" fill="none" stroke="#424242" stroke-width="1.3"/><path d="M5,4.5 H13 L16.5,8 V17 H5 Z" fill="#F5F5F5" stroke="#424242" stroke-width="1.3"/><path d="M7.5,9.5 H14 M7.5,12 H14 M7.5,14.5 H12" stroke="#424242" stroke-width="1.1"/></svg>
<div class="a" style="left:1771px;top:121px;width:1px;height:23px;background:#CCCEDB;"></div>
<svg style="left:1782px;top:129px;" width="16" height="10" viewBox="0 0 16 10"><path d="M5.5,0.8 L1.2,5 L5.5,9.2 M10.5,0.8 L14.8,5 L10.5,9.2" fill="none" stroke="#1E1E1E" stroke-width="1.7"/></svg>
<svg style="left:1808px;top:125px;" width="18" height="18" viewBox="0 0 18 18"><g transform="scale(1.0)"><path d="M17.5,4.5 L14.5,7.5 L11,7 L10.5,3.5 L13.5,0.5 C10.5,-0.5 7,2 7.5,6 C7.6,6.8 7.8,7.4 8.1,8 L1.2,14.9 C0.3,15.8 0.3,16.9 1,17.6 C1.7,18.3 2.8,18.2 3.7,17.3 L10.5,10.5 C11,10.8 11.7,11 12.5,11 C16.3,11.2 18.5,7.8 17.5,4.5 Z" fill="#1E1E1E"/></g></svg>
<div class="a" style="left:1831px;top:119px;width:27px;height:29px;box-shadow:inset 0 0 0 1px #3399FF;"></div>
<svg style="left:1835px;top:131px;" width="19" height="7" viewBox="0 0 19 7"><rect x="0" y="4.3" width="8" height="1.3" fill="#1E1E1E"/><rect x="8" y="0.5" width="10.5" height="5" fill="#1E1E1E"/></svg>
<svg style="left:1877px;top:156px;" width="16" height="16" viewBox="0 0 16 16"><circle cx="10" cy="6" r="4.2" fill="none" stroke="#424242" stroke-width="2"/><line x1="7" y1="9" x2="1.5" y2="14.5" stroke="#424242" stroke-width="2.6" stroke-linecap="round"/></svg>
<svg style="left:1900px;top:163px;" width="7" height="4" viewBox="0 0 7 4"><polygon points="0,0 7,0 3.5,4" fill="#717171"/></svg>
<svg style="left:1495px;top:184px;" width="19" height="18" viewBox="0 0 19 18"><rect x="0.2" y="0.7" width="17.5" height="3.5" fill="#424242"/><path d="M1,4 V8 M16.8,4 V14.3 H8.5" fill="none" stroke="#424242" stroke-width="1.6"/><g transform="translate(0,7.5) scale(0.4)"><path d="M18.5,0.8 L25,4 L25,22 L18.5,25.2 L8.5,15.8 L3.6,19.6 L1,18.3 L1,7.7 L3.6,6.4 L8.5,10.2 Z M18.5,7.6 L12.4,13 L18.5,18.4 Z M3.6,10.2 L3.6,15.8 L6.4,13 Z" fill="#865FC5" fill-rule="evenodd"/></g></svg>
<svg style="left:1492px;top:211px;" width="9" height="9" viewBox="0 0 9 9"><polygon points="8.5,0.5 8.5,8.5 0.5,8.5" fill="#1E1E1E"/></svg>
<svg style="left:1518px;top:208px;" width="19" height="17" viewBox="0 0 19 17"><rect x="0.8" y="0.8" width="17.4" height="15.4" fill="#F6F6F6" stroke="#388A34" stroke-width="1.4"/><g transform="scale(1.0555555555555556,1.0625)"><path d="M8,5.6 C7.4,4.8 6.6,4.6 5.9,4.6 C4.2,4.6 3.2,6 3.2,7.9 C3.2,9.8 4.2,11.2 5.9,11.2 C6.6,11.2 7.4,11 8,10.2" fill="none" stroke="#424242" stroke-width="1.5"/><path d="M10.4,4.4 V10.2 M12.9,4.4 V10.2 M9.1,6.2 H14.6 M9.1,8.5 H14.6" stroke="#424242" stroke-width="1.05"/></g></svg>
<svg style="left:1515px;top:233px;" width="7" height="11" viewBox="0 0 7 11"><polygon points="1,1 6,5.5 1,10" fill="none" stroke="#1E1E1E" stroke-width="1.3"/></svg>
<svg style="left:1515px;top:256px;" width="7" height="11" viewBox="0 0 7 11"><polygon points="1,1 6,5.5 1,10" fill="none" stroke="#1E1E1E" stroke-width="1.3"/></svg>
<svg style="left:1515px;top:302px;" width="7" height="11" viewBox="0 0 7 11"><polygon points="1,1 6,5.5 1,10" fill="none" stroke="#1E1E1E" stroke-width="1.3"/></svg>
<svg style="left:1540px;top:230px;" width="18" height="18" viewBox="0 0 18 18"><g transform="scale(1.0)"><path d="M17.5,4.5 L14.5,7.5 L11,7 L10.5,3.5 L13.5,0.5 C10.5,-0.5 7,2 7.5,6 C7.6,6.8 7.8,7.4 8.1,8 L1.2,14.9 C0.3,15.8 0.3,16.9 1,17.6 C1.7,18.3 2.8,18.2 3.7,17.3 L10.5,10.5 C11,10.8 11.7,11 12.5,11 C16.3,11.2 18.5,7.8 17.5,4.5 Z" fill="#1E1E1E"/></g></svg>
<svg style="left:1540px;top:257px;" width="18" height="10" viewBox="0 0 18 10"><rect x="0.5" y="2" width="4" height="5" fill="#424242"/><rect x="5.5" y="4" width="3" height="1.2" fill="#424242"/><rect x="9.5" y="0.5" width="8" height="9" fill="#424242"/></svg>
<svg style="left:1540px;top:275px;" width="18" height="19" viewBox="0 0 18 19"><path d="M5,1 H13 L17,5 V18 H6" fill="#F6F6F6" stroke="#424242" stroke-width="1.3"/><path d="M13,1 V5 H17" fill="none" stroke="#424242" stroke-width="1"/><path d="M4.5,6.5 C1.5,6.5 0.8,9 1.2,10.5 C1.6,12 3,12.5 3.5,12.5 V17.5 H5.5 V12.5 C6,12.5 7.4,12 7.8,10.5 C8.2,9 7.5,6.5 4.5,6.5 Z" fill="#424242"/><rect x="3.5" y="6" width="2" height="3.5" fill="#F5F5F5"/></svg>
<svg style="left:1542px;top:302px;" width="16" height="11" viewBox="0 0 16 11"><text x="0" y="10" font-family="Liberation Sans" font-weight="bold" font-size="11" fill="#388A34" letter-spacing="-0.3">C#</text></svg>
<svg style="left:1850px;top:627px;" width="10" height="6" viewBox="0 0 10 6"><polygon points="0,0 10,0 5.0,6" fill="#1E1E1E"/></svg>
<svg style="left:1870px;top:623px;" width="11" height="15" viewBox="0 0 11 15"><path d="M2,0.5 H9 M3,0.5 V8.5 H8 V0.5 M1,8.5 H10 M5.5,8.5 V14.5" fill="none" stroke="#1E1E1E" stroke-width="1.4"/><rect x="3" y="0.5" width="2.2" height="8" fill="#1E1E1E"/></svg>
<svg style="left:1891px;top:624.8px;" width="12" height="10.5" viewBox="0 0 12 10.5"><path d="M0.8,0.6 L11.2,9.9 M11.2,0.6 L0.8,9.9" stroke="#1E1E1E" stroke-width="1.6"/></svg>
<svg style="left:1899px;top:657px;" width="7" height="4" viewBox="0 0 7 4"><polygon points="0,0 7,0 3.5,4" fill="#717171"/></svg>
<div class="a" style="left:1482px;top:674px;width:29px;height:28px;box-shadow:inset 0 0 0 1px #3399FF;"></div>
<svg style="left:1488px;top:679px;" width="18" height="18" viewBox="0 0 18 18"><rect x="0.8" y="0.8" width="4.4" height="4.4" fill="none" stroke="#1E1E1E" stroke-width="1.2"/><rect x="2.3" y="2.3" width="1.4" height="1.4" fill="#1E1E1E"/><rect x="0.8" y="11.8" width="4.4" height="4.4" fill="none" stroke="#1E1E1E" stroke-width="1.2"/><rect x="2.3" y="13.3" width="1.4" height="1.4" fill="#1E1E1E"/><path d="M8,1.5 H17.5 M8,4 H17.5 M8,6.5 H17.5 M8,9 H17.5 M8,12.5 H17.5 M8,15 H17.5 M8,17.5 H12 M13.5,17.5 H17.5" stroke="#1E1E1E" stroke-width="1.1"/></svg>
<svg style="left:1516px;top:679px;" width="20" height="19" viewBox="0 0 20 19"><rect x="0.8" y="0.8" width="8" height="8" fill="none" stroke="#424242" stroke-width="1.2"/><text x="1.8" y="7.8" font-family="Liberation Sans" font-weight="bold" font-size="8" fill="#424242">A</text><text x="1.5" y="18" font-family="Liberation Sans" font-weight="bold" font-size="9.5" fill="#424242">Z</text><path d="M14.5,5 V15" stroke="#1A5BAA" stroke-width="2"/><polygon points="11,12 18,12 14.5,17.5" fill="#1A5BAA"/></svg>
<div class="a" style="left:1543px;top:676px;width:1px;height:25px;background:#CCCEDB;"></div>
<svg style="left:1551px;top:679px;" width="19" height="19" viewBox="0 0 19 19"><g transform="scale(1.0555555555555556)"><path d="M17.5,4.5 L14.5,7.5 L11,7 L10.5,3.5 L13.5,0.5 C10.5,-0.5 7,2 7.5,6 C7.6,6.8 7.8,7.4 8.1,8 L1.2,14.9 C0.3,15.8 0.3,16.9 1,17.6 C1.7,18.3 2.8,18.2 3.7,17.3 L10.5,10.5 C11,10.8 11.7,11 12.5,11 C16.3,11.2 18.5,7.8 17.5,4.5 Z" fill="#B4B4B4"/></g></svg>
<div class="a" style="left:1479px;top:913px;width:433px;height:1px;background:#E8E8EC;"></div>
<svg style="left:5px;top:1009px;" width="20" height="14" viewBox="0 0 20 14"><polygon points="4,1 19,1 16,13 1,13" fill="none" stroke="#FFFFFF" stroke-width="1.4"/></svg>
<svg style="left:1566px;top:1009px;" width="12" height="14" viewBox="0 0 12 14"><path d="M6,13.5 V2 M1.5,6 L6,1.5 L10.5,6" fill="none" stroke="#FFFFFF" stroke-width="1.8"/></svg>
<svg style="left:1835px;top:1012px;" width="10" height="6" viewBox="0 0 10 6"><polygon points="0,6 10,6 5.0,0" fill="#FFFFFF"/></svg>
<svg style="left:1871px;top:1005px;" width="17" height="19" viewBox="0 0 17 19"><path d="M8.5,1 C5,1 3.5,3.5 3.5,7 V11 L1.5,14 H15.5 L13.5,11 V7 C13.5,3.5 12,1 8.5,1 Z" fill="#D0D0D0"/><path d="M6.5,15.5 C6.5,17.5 10.5,17.5 10.5,15.5 Z" fill="#D0D0D0"/></svg>
<div class="a" style="left:1881px;top:1012px;width:16px;height:16px;border-radius:50%;background:#E51400;"></div>
<div class="a t" style="left:1884.95px;top:1016.19px;font-size:11px;line-height:11px;color:#FFFFFF;">2</div>
</body></html>
